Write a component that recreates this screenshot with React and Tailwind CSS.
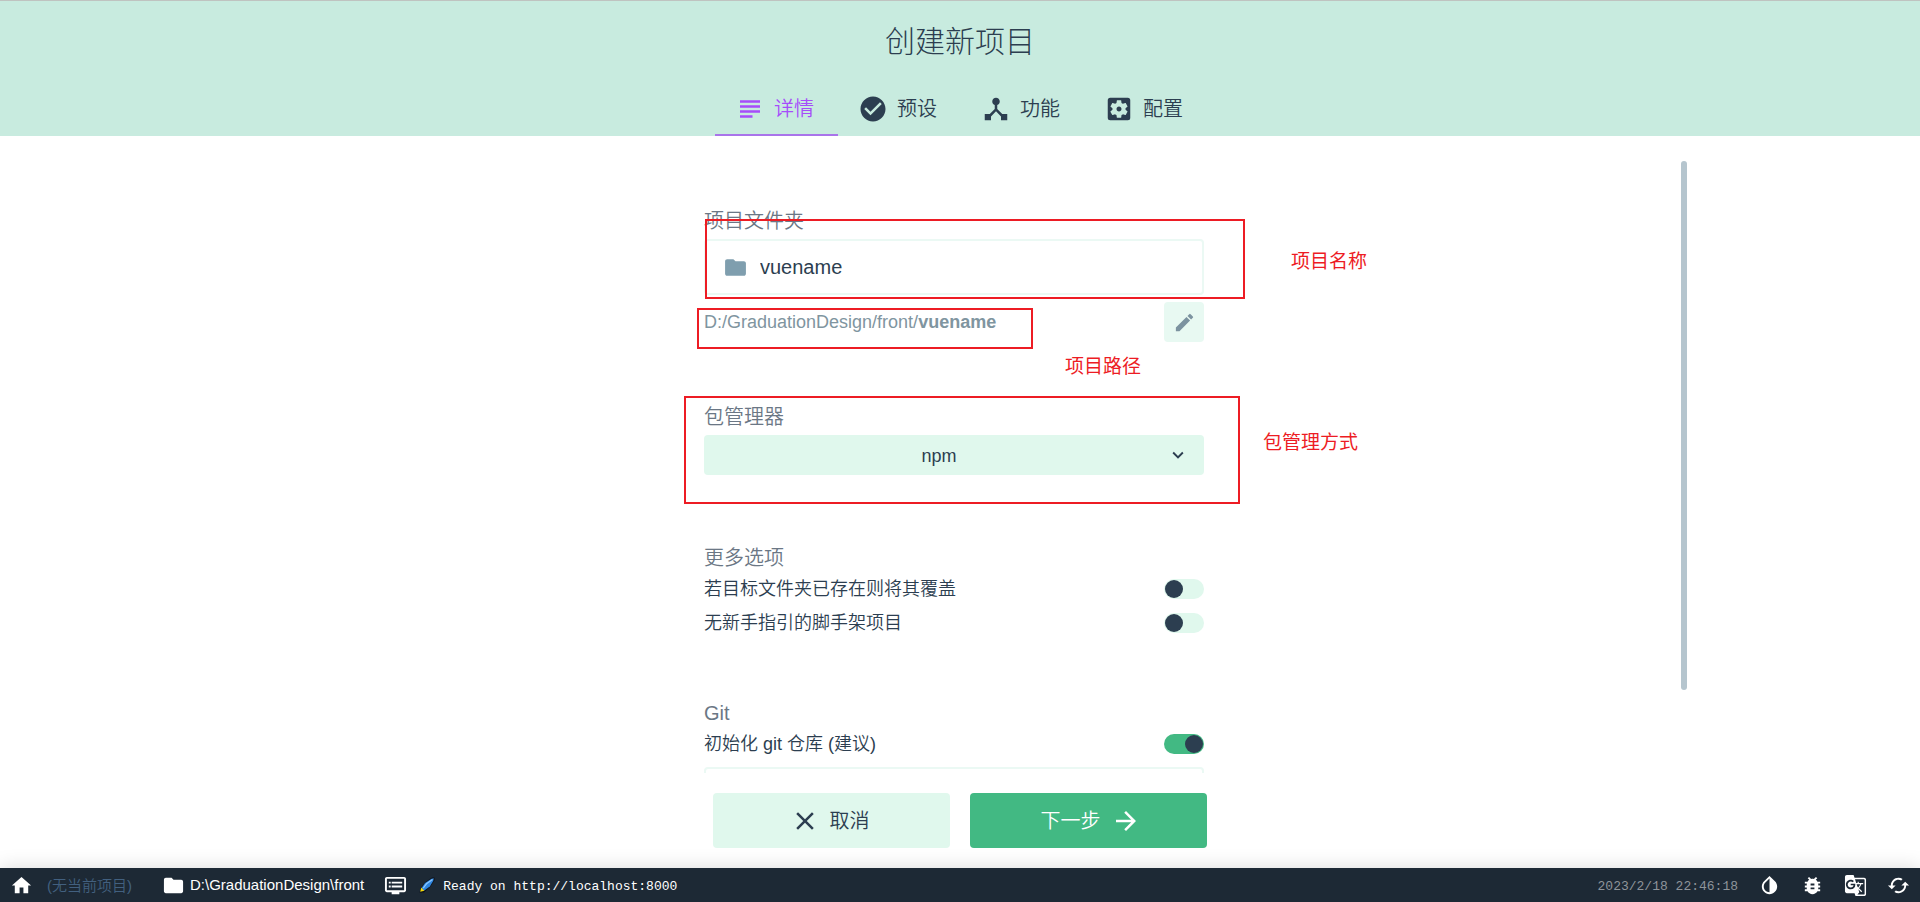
import { useState } from 'react';
import clsx from 'clsx';
import {
  MdArrowForward,
  MdBugReport,
  MdCached,
  MdCheckCircle,
  MdClose,
  MdDeviceHub,
  MdDvr,
  MdEdit,
  MdFolder,
  MdGTranslate,
  MdHome,
  MdInvertColors,
  MdKeyboardArrowDown,
  MdSettingsApplications,
  MdSubject,
} from 'react-icons/md';

const TABS = [
  { key: 'details', label: '详情', icon: MdSubject },
  { key: 'presets', label: '预设', icon: MdCheckCircle },
  { key: 'features', label: '功能', icon: MdDeviceHub },
  { key: 'config', label: '配置', icon: MdSettingsApplications },
];

const STATUS_ACTIONS = [
  { key: 'theme', label: '切换主题', icon: MdInvertColors },
  { key: 'bug', label: '报告问题', icon: MdBugReport },
  { key: 'translate', label: '翻译', icon: MdGTranslate },
  { key: 'reload', label: '刷新', icon: MdCached },
];

function GroupTitle({ htmlFor, children }) {
  const Tag = htmlFor ? 'label' : 'h2';
  return (
    <Tag htmlFor={htmlFor} className="block text-xl leading-7 text-[#6b7785]">
      {children}
    </Tag>
  );
}

function SwitchRow({ id, label, checked, onChange }) {
  return (
    <label htmlFor={id} className="flex h-[34px] cursor-pointer items-center justify-between">
      <span className="text-lg leading-6">{label}</span>
      <input
        id={id}
        type="checkbox"
        role="switch"
        checked={checked}
        onChange={(e) => onChange(e.target.checked)}
        className="h-5 w-10 cursor-pointer appearance-none rounded-full bg-[#e0f8ed] px-px py-px before:block before:size-[18px] before:rounded-full before:bg-[#2c3e50] checked:bg-[#42b983] checked:before:ml-auto"
      />
    </label>
  );
}

function Note({ box, text, children }) {
  return (
    <>
      <div className={clsx('pointer-events-none absolute border-2 border-[#ed1c24]', box)} />
      <span className={clsx('absolute text-[19px] leading-6 font-normal whitespace-nowrap text-[#ed1c24]', text)}>
        {children}
      </span>
    </>
  );
}

function Header({ active, onSelect }) {
  return (
    <header className="border-t border-[#bfc3c0] bg-[#c8ebdf]">
      <h1 className="pt-5 text-center text-3xl leading-[42px] font-light">创建新项目</h1>
      <nav className="mt-[19px] flex justify-center pl-0.5">
        {TABS.map(({ key, label, icon: Icon }) => (
          <button
            key={key}
            type="button"
            onClick={() => onSelect(key)}
            className={clsx(
              'flex h-[54px] items-center gap-[9px] border-b-2 pt-0.5 pr-6 pl-5 text-xl',
              active === key ? 'border-[#a974ea] text-[#a64dfa]' : 'border-transparent',
            )}
          >
            <Icon className="size-[30px]" />
            {label}
          </button>
        ))}
      </nav>
    </header>
  );
}

function DetailsForm() {
  const [name, setName] = useState('vuename');
  const [manager, setManager] = useState('npm');
  const [force, setForce] = useState(false);
  const [bare, setBare] = useState(false);
  const [git, setGit] = useState(true);

  return (
    <form className="mx-auto w-full max-w-[500px] pt-[46px]">
      <section className="relative">
        <GroupTitle htmlFor="folder">项目文件夹</GroupTitle>
        <div className="mt-1 flex h-14 items-center gap-3 rounded border-2 border-[#ebf9f4] px-[17px]">
          <MdFolder className="size-[25px] shrink-0 text-[#7f9eae]" />
          <input
            id="folder"
            type="text"
            value={name}
            onChange={(e) => setName(e.target.value)}
            className="w-full bg-transparent text-xl outline-none"
          />
        </div>
        <div className="mt-[7px] flex items-center justify-between">
          <div className="text-lg leading-6 text-[#7f95a0]">
            D:/GraduationDesign/front/<b className="font-bold">{name}</b>
          </div>
          <button type="button" aria-label="编辑路径" className="flex size-10 items-center justify-center rounded bg-[#e8f9f2]">
            <MdEdit className="size-[23px] text-[#7c93a0]" />
          </button>
        </div>
        <Note box="top-3 left-px h-20 w-[540px]" text="top-[43px] left-[587px]">
          项目名称
        </Note>
        <Note box="top-[101px] -left-[7px] h-[41px] w-[336px]" text="top-[148px] left-[361px]">
          项目路径
        </Note>
      </section>

      <section className="relative mt-[61px]">
        <GroupTitle htmlFor="manager">包管理器</GroupTitle>
        <div className="relative mt-1">
          <select
            id="manager"
            value={manager}
            onChange={(e) => setManager(e.target.value)}
            className="h-10 w-full appearance-none rounded bg-[#e0f8ed] pt-0.5 pr-[46px] pl-4 text-lg [text-align-last:center]"
          >
            <option value="npm">npm</option>
            <option value="yarn">yarn</option>
          </select>
          <MdKeyboardArrowDown className="pointer-events-none absolute top-[9px] right-[15px] size-[22px]" />
        </div>
        <Note box="-top-[7px] -left-5 h-[108px] w-[556px]" text="top-7 left-[559px]">
          包管理方式
        </Note>
      </section>

      <section className="mt-[69px]">
        <GroupTitle>更多选项</GroupTitle>
        <SwitchRow id="force" label="若目标文件夹已存在则将其覆盖" checked={force} onChange={setForce} />
        <SwitchRow id="bare" label="无新手指引的脚手架项目" checked={bare} onChange={setBare} />
      </section>

      <section className="mt-[59px]">
        <GroupTitle>Git</GroupTitle>
        <SwitchRow id="git" label="初始化 git 仓库 (建议)" checked={git} onChange={setGit} />
        <input
          type="text"
          aria-label="初始提交信息"
          className="mt-1.5 block h-14 w-full rounded border-2 border-[#ebf9f4] px-4 text-xl outline-none"
        />
      </section>
    </form>
  );
}

function QuillIcon() {
  return (
    <svg viewBox="0 0 16 16" className="size-4">
      <path d="M15.5 0.5H13L6.5 5 2 10.5 0.5 15.5 5 15.5 11 10 15.5 3.5Z" fill="#0c1118" />
      <path d="M14.8 1.2 12.5 1.8 6 6 2.4 11.2 5 13.8 10.8 9.4 14.2 4Z" fill="#2f86e0" />
      <path d="M13.5 2.5 7.5 6.8 4.2 11.2" stroke="#8cc8ff" strokeWidth="1.2" fill="none" />
      <path d="M2.2 10.6 1.2 14.8 5.4 13.8Z" fill="#f5d90a" />
    </svg>
  );
}

function StatusBar() {
  return (
    <footer className="relative flex h-[34px] shrink-0 items-center bg-[#1d2935] px-2.5 text-[15px] text-white shadow-[0_0_20px_rgba(0,0,0,0.15)]">
      <a href="#home" aria-label="主页">
        <MdHome className="size-[23px]" />
      </a>
      <span className="ml-3.5 pt-0.5 text-[#42607f]">(无当前项目)</span>
      <div className="ml-[30px] flex items-center gap-[5px]">
        <MdFolder className="size-[23px]" />
        D:\GraduationDesign\front
      </div>
      <div className="ml-5 flex items-center">
        <MdDvr className="size-[23px]" />
        <span className="ml-3">
          <QuillIcon />
        </span>
        <span className="ml-2 pt-1 font-['Liberation_Mono',monospace] text-[13px]">Ready on http://localhost:8000</span>
      </div>
      <time className="mr-5 ml-auto pt-1 font-['Liberation_Mono',monospace] text-[13px] text-[#8e949a]">
        2023/2/18 22:46:18
      </time>
      <div className="flex gap-5">
        {STATUS_ACTIONS.map(({ key, label, icon: Icon }) => (
          <button key={key} type="button" aria-label={label}>
            <Icon className="size-[23px]" />
          </button>
        ))}
      </div>
    </footer>
  );
}

export default function App() {
  const [tab, setTab] = useState('details');

  return (
    <div className="flex h-screen flex-col bg-white font-['Liberation_Sans','Noto_Sans_CJK_SC',sans-serif] font-[350] text-[#2c3e50]">
      <Header active={tab} onSelect={setTab} />

      <main className="mx-auto flex min-h-0 w-full max-w-[1454px] flex-1 gap-1.5 overflow-hidden pt-[25px]">
        <div className="min-w-0 flex-1">
          <DetailsForm />
        </div>
        <div className="w-1.5 shrink-0">
          <div className="h-[86.5%] rounded-full bg-[#b5c5ce]" />
        </div>
      </main>

      <div className="flex shrink-0 justify-center gap-5 py-5">
        <button type="button" className="flex h-[55px] w-[237px] items-center justify-center gap-2.5 rounded bg-[#e0f8ed] pr-1 text-xl">
          <MdClose className="size-[30px]" />
          取消
        </button>
        <button type="button" className="flex h-[55px] w-[237px] items-center justify-center gap-2.5 rounded bg-[#42b983] pl-1 text-xl text-white">
          下一步
          <MdArrowForward className="size-[30px]" />
        </button>
      </div>

      <StatusBar />
    </div>
  );
}
